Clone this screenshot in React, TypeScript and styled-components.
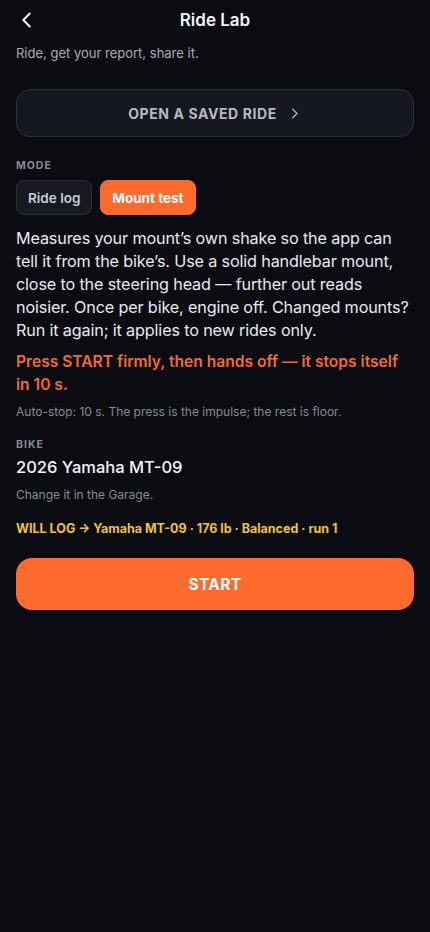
import React, { useState } from "react";
import styled, { createGlobalStyle } from "styled-components";

const GlobalStyle = createGlobalStyle`
  html, body {
    margin: 0;
    padding: 0;
    background: #0b0c12;
  }
  body {
    font-family: Inter, "Noto Sans", "Liberation Sans", sans-serif;
    color: #ececf0;
    -webkit-font-smoothing: antialiased;
  }
`;

const Screen = styled.div`
  width: 430px;
  min-height: 932px;
  background: #0b0c12;
  box-sizing: border-box;
  padding: 0 16px;
`;

const Header = styled.header`
  height: 40px;
  display: grid;
  grid-template-columns: 40px 1fr 40px;
  align-items: center;
`;

const BackButton = styled.button`
  background: none;
  border: none;
  padding: 0;
  color: #f2f2f5;
  display: flex;
  align-items: center;
  cursor: pointer;
`;

const Title = styled.h1`
  margin: 0;
  text-align: center;
  font-size: 17px;
  font-weight: 600;
  color: #f4f4f7;
`;

const Subtitle = styled.p`
  margin: 5px 0 0;
  font-size: 13px;
  color: #a9acb5;
`;

const SavedRideButton = styled.button`
  margin-top: 28px;
  width: 100%;
  height: 48px;
  border-radius: 14px;
  background: #161820;
  border: 1px solid #2d3039;
  color: #b6bac4;
  font-family: inherit;
  font-size: 14px;
  font-weight: 700;
  letter-spacing: 0.6px;
  display: flex;
  align-items: center;
  justify-content: center;
  gap: 10px;
  cursor: pointer;
`;

const Label = styled.div<{ $top: number }>`
  margin-top: ${(p) => p.$top}px;
  font-size: 10.5px;
  font-weight: 700;
  letter-spacing: 1px;
  color: #868993;
`;

const Segments = styled.div`
  margin-top: 8px;
  display: flex;
  gap: 8px;
`;

const Segment = styled.button<{ $active: boolean }>`
  height: 35px;
  padding: 0 11px;
  border-radius: 8px;
  font-family: inherit;
  font-size: 13.5px;
  font-weight: ${(p) => (p.$active ? 700 : 600)};
  cursor: pointer;
  background: ${(p) => (p.$active ? "#ff6b2c" : "#181a22")};
  color: ${(p) => (p.$active ? "#ffffff" : "#c9ccd4")};
  border: 1px solid ${(p) => (p.$active ? "#ff6b2c" : "#2c2f38")};
`;

const Body = styled.p`
  margin: 12px 0 0;
  font-size: 16.2px;
  letter-spacing: -0.15px;
  line-height: 23px;
  color: #e9e9ee;
`;

const Warning = styled.p`
  margin: 8px 0 0;
  font-size: 15.6px;
  line-height: 23px;
  font-weight: 600;
  color: #f26b2e;
`;

const Note = styled.p<{ $top: number }>`
  margin: ${(p) => p.$top}px 0 0;
  font-size: 12px;
  color: #878a93;
`;

const BikeName = styled.div`
  margin-top: 6px;
  font-size: 16.5px;
  font-weight: 500;
  color: #f4f4f7;
`;

const WillLog = styled.div`
  margin-top: 19px;
  font-size: 12.5px;
  font-weight: 700;
  color: #f1c232;
`;

const StartButton = styled.button`
  margin-top: 22px;
  width: 100%;
  height: 52px;
  border: none;
  border-radius: 16px;
  background: #ff6b2c;
  color: #fff;
  font-family: inherit;
  font-size: 15.5px;
  font-weight: 700;
  letter-spacing: 0.4px;
  cursor: pointer;
`;

const Chevron = ({ dir, size, color }: { dir: "left" | "right"; size: number; color: string }) => (
  <svg width={size} height={size} viewBox="0 0 24 24" fill="none" stroke={color} strokeWidth={2.2} strokeLinecap="round" strokeLinejoin="round">
    {dir === "left" ? <path d="M15 5l-7 7 7 7" /> : <path d="M9 5l7 7-7 7" />}
  </svg>
);

const App = () => {
  const [mode, setMode] = useState<"log" | "mount">("mount");
  return (
    <>
      <GlobalStyle />
      <Screen>
        <Header>
          <BackButton aria-label="Back">
            <Chevron dir="left" size={22} color="#f2f2f5" />
          </BackButton>
          <Title>Ride Lab</Title>
          <span />
        </Header>
        <Subtitle>Ride, get your report, share it.</Subtitle>
        <SavedRideButton>
          OPEN A SAVED RIDE
          <Chevron dir="right" size={15} color="#b6bac4" />
        </SavedRideButton>

        <Label $top={22}>MODE</Label>
        <Segments>
          <Segment $active={mode === "log"} onClick={() => setMode("log")}>Ride log</Segment>
          <Segment $active={mode === "mount"} onClick={() => setMode("mount")}>Mount test</Segment>
        </Segments>

        <Body>
          Measures your mount’s own shake so the app can tell it from the bike’s. Use a solid handlebar mount,
          close to the steering head — further out reads noisier. Once per bike, engine off. Changed mounts?
          Run it again; it applies to new rides only.
        </Body>
        <Warning>Press START firmly, then hands off — it stops itself in 10 s.</Warning>
        <Note $top={8}>Auto-stop: 10 s. The press is the impulse; the rest is floor.</Note>

        <Label $top={19}>BIKE</Label>
        <BikeName>2026 Yamaha MT-09</BikeName>
        <Note $top={10}>Change it in the Garage.</Note>

        <WillLog>WILL LOG → Yamaha MT-09 · 176 lb · Balanced · run 1</WillLog>
        <StartButton>START</StartButton>
      </Screen>
    </>
  );
};

export default App;
